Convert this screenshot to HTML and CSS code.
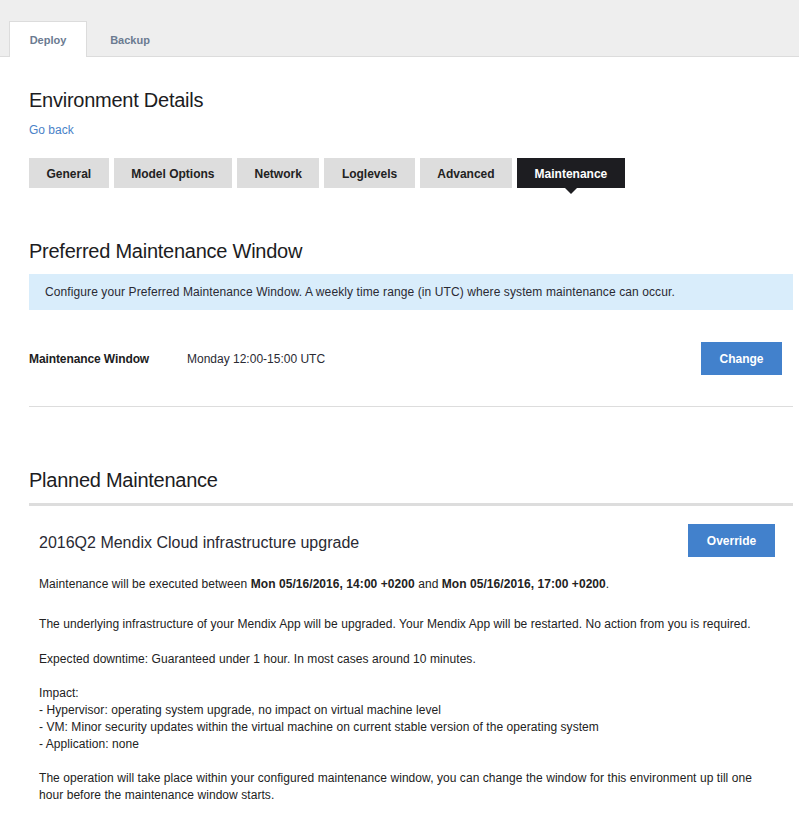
FILE: index.html
```html
<!DOCTYPE html>
<html>
<head>
<meta charset="utf-8">
<link rel="stylesheet" href="styles.css">
</head>
<body>
<div class="topbar">
  <div class="tab tab-active">Deploy</div>
  <div class="tab">Backup</div>
</div>
<main class="content">
  <h1 class="title">Environment Details</h1>
  <a class="goback" href="#">Go back</a>
  <nav class="subtabs">
    <span class="subtab">General</span>
    <span class="subtab">Model Options</span>
    <span class="subtab">Network</span>
    <span class="subtab">Loglevels</span>
    <span class="subtab">Advanced</span>
    <span class="subtab subtab-active">Maintenance</span>
  </nav>

  <h2 class="section-title pmw">Preferred Maintenance Window</h2>
  <div class="info">Configure your Preferred Maintenance Window. A weekly time range (in UTC) where system maintenance can occur.</div>
  <div class="mw-row">
    <span class="mw-label">Maintenance Window</span>
    <span class="mw-value">Monday 12:00-15:00 UTC</span>
    <button class="btn btn-change">Change</button>
  </div>

  <h2 class="section-title planned">Planned Maintenance</h2>
  <div class="card">
    <div class="card-head">
      <span class="card-title">2016Q2 Mendix Cloud infrastructure upgrade</span>
      <button class="btn btn-override">Override</button>
    </div>
    <p class="p-first">Maintenance will be executed between <b>Mon 05/16/2016, 14:00 +0200</b> and <b>Mon 05/16/2016, 17:00 +0200</b>.</p>
    <p class="p-second">The underlying infrastructure of your Mendix App will be upgraded. Your Mendix App will be restarted. No action from you is required.</p>
    <p class="p-third">Expected downtime: Guaranteed under 1 hour. In most cases around 10 minutes.</p>
    <p>Impact:<br>- Hypervisor: operating system upgrade, no impact on virtual machine level<br>- VM: Minor security updates within the virtual machine on current stable version of the operating system<br>- Application: none</p>
    <p>The operation will take place within your configured maintenance window, you can change the window for this environment up till one hour before the maintenance window starts.</p>
  </div>
</main>
</body>
</html>
```

FILE: styles.css
```css
* { box-sizing: border-box; }
html, body { margin: 0; padding: 0; background: #fff; }
body {
  font-family: "Liberation Sans", Arial, sans-serif;
  color: #222;
  font-size: 12px;
}
.topbar {
  height: 57px;
  background: #eeeeee;
  border-bottom: 1px solid #dcdcdc;
  display: flex;
  align-items: flex-end;
  padding-left: 9px;
  gap: 4px;
}
.tab {
  width: 78px;
  height: 35px;
  margin-bottom: -1px;
  display: flex;
  align-items: center;
  justify-content: center;
  font-weight: bold;
  font-size: 11px;
  color: #6b7b91;
  border: 1px solid transparent;
  border-bottom: none;
}
.tab-active {
  background: #fff;
  border-color: #dcdcdc;
  height: 36px;
}
.content {
  padding: 0 6px 0 29px;
}
.title {
  margin: 32px 0 0;
  font-size: 20px;
  font-weight: normal;
  line-height: 22px;
  letter-spacing: -0.25px;
  color: #1c1c22;
}
.goback {
  display: block;
  margin-top: 12px;
  color: #4a82c8;
  text-decoration: none;
  font-size: 12px;
  line-height: 15px;
}
.subtabs {
  display: flex;
  gap: 5px;
  margin-top: 20px;
}
.subtab {
  position: relative;
  height: 30px;
  padding: 1px 17.5px 0;
  display: flex;
  align-items: center;
  background: #dddddd;
  color: #222;
  font-weight: bold;
  font-size: 12px;
}
.subtab-active {
  background: #1d1d21;
  color: #fff;
}
.subtab-active::after {
  content: "";
  position: absolute;
  left: 50%;
  top: 30px;
  margin-left: -6px;
  border-left: 6px solid transparent;
  border-right: 6px solid transparent;
  border-top: 6px solid #1d1d21;
}
.section-title {
  margin: 0;
  font-size: 20px;
  font-weight: normal;
  line-height: 22px;
  letter-spacing: -0.25px;
  color: #1c1c22;
}
.pmw { margin-top: 52px; }
.info {
  margin-top: 12px;
  height: 36px;
  display: flex;
  align-items: center;
  padding-left: 16px;
  background: #d9edfb;
  color: #2a2a33;
  font-size: 12px;
  letter-spacing: 0.1px;
}
.mw-row {
  display: flex;
  align-items: center;
  padding: 32px 11px 31px 0;
  border-bottom: 1px solid #dddddd;
}
.mw-label {
  width: 158px;
  font-weight: bold;
  letter-spacing: -0.1px;
  color: #1c1c22;
}
.mw-value { color: #2a2a33; }
.btn {
  border: none;
  background: #4281cc;
  color: #fff;
  font-family: "Liberation Sans", Arial, sans-serif;
  font-weight: bold;
  font-size: 12px;
  height: 33px;
  padding: 0;
  margin-left: auto;
}
.btn-change { width: 81px; }
.planned { margin-top: 62px; }
.card {
  margin-top: 12px;
  border-top: 3px solid #dddddd;
  padding: 18px 18px 10px 10px;
}
.card-head {
  display: flex;
  align-items: center;
}
.card-title {
  font-size: 16px;
  color: #2a2a33;
  padding-top: 4px;
}
.btn-override { width: 87px; }
.card p {
  margin: 17px 0 0;
  line-height: 17px;
  color: #222;
  letter-spacing: 0.06px;
}
.card p.p-first { margin-top: 19px; }
.card p.p-second { margin-top: 23px; }
.card p.p-third { margin-top: 18px; }
```
